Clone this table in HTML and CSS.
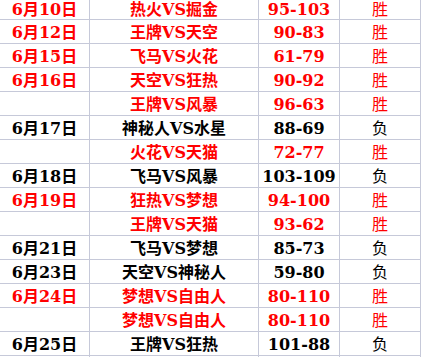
FILE: index.html
```html
<!DOCTYPE html>
<html lang="zh-CN">
<head>
<meta charset="utf-8">
<link rel="stylesheet" href="styles.css">
</head>
<body>
<div class="sheet">
  <div class="c red">6月10日</div><div class="c red">热火VS掘金</div><div class="c red">95-103</div><div class="c res red">胜</div>
  <div class="c red">6月12日</div><div class="c red">王牌VS天空</div><div class="c red">90-83</div><div class="c res red">胜</div>
  <div class="c red">6月15日</div><div class="c red">飞马VS火花</div><div class="c red">61-79</div><div class="c res red">胜</div>
  <div class="c red">6月16日</div><div class="c red">天空VS狂热</div><div class="c red">90-92</div><div class="c res red">胜</div>
  <div class="c red"></div><div class="c red">王牌VS风暴</div><div class="c red">96-63</div><div class="c res red">胜</div>
  <div class="c blk">6月17日</div><div class="c blk">神秘人VS水星</div><div class="c blk">88-69</div><div class="c res blk">负</div>
  <div class="c red"></div><div class="c red">火花VS天猫</div><div class="c red">72-77</div><div class="c res red">胜</div>
  <div class="c blk">6月18日</div><div class="c blk">飞马VS风暴</div><div class="c blk">103-109</div><div class="c res blk">负</div>
  <div class="c red">6月19日</div><div class="c red">狂热VS梦想</div><div class="c red">94-100</div><div class="c res red">胜</div>
  <div class="c red"></div><div class="c red">王牌VS天猫</div><div class="c red">93-62</div><div class="c res red">胜</div>
  <div class="c blk">6月21日</div><div class="c blk">飞马VS梦想</div><div class="c blk">85-73</div><div class="c res blk">负</div>
  <div class="c blk">6月23日</div><div class="c blk">天空VS神秘人</div><div class="c blk">59-80</div><div class="c res blk">负</div>
  <div class="c red">6月24日</div><div class="c red">梦想VS自由人</div><div class="c red">80-110</div><div class="c res red">胜</div>
  <div class="c red"></div><div class="c red">梦想VS自由人</div><div class="c red">80-110</div><div class="c res red">胜</div>
  <div class="c blk">6月25日</div><div class="c blk">王牌VS狂热</div><div class="c blk">101-88</div><div class="c res blk">负</div>
  <div class="c"></div><div class="c"></div><div class="c"></div><div class="c"></div>
</div>
</body>
</html>
```
FILE: styles.css
```css
html, body {
  margin: 0;
  padding: 0;
  background: #ffffff;
  overflow: hidden;
}
.sheet {
  display: grid;
  grid-template-columns: 89px 168px 80px 80px;
  grid-template-rows: 19px repeat(14, 23px) 1px;
  gap: 1px;
  width: 421px;
  height: 357px;
  padding-right: 1px;
  box-sizing: border-box;
  background: #c6c9d9;
  overflow: hidden;
}
.c {
  background: #ffffff;
  display: flex;
  align-items: center;
  justify-content: center;
  font-family: "DejaVu Serif", "Noto Sans CJK SC", serif;
  font-weight: bold;
  font-size: 16px;
  line-height: 1;
  padding-top: 2px;
  white-space: nowrap;
  overflow: hidden;
}
.sheet .c:nth-child(-n+4) {
  padding-top: 1px;
}
.sheet .c:nth-last-child(-n+4) {
  padding-top: 0;
}
.res {
  font-weight: normal;
}
.red {
  color: #ff0000;
}
.blk {
  color: #000000;
}
```
